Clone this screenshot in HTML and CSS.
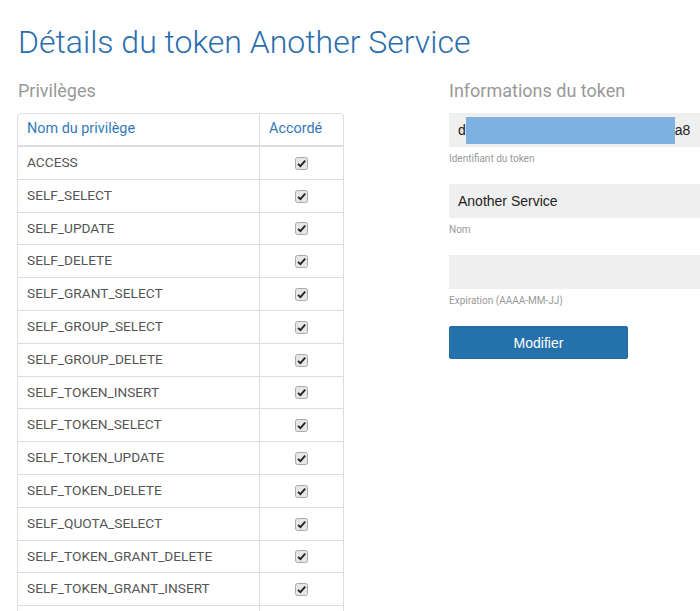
FILE: index.html
```html
<!DOCTYPE html>
<html lang="fr">
<head>
<meta charset="utf-8">
<title>Détails du token</title>
<link rel="stylesheet" href="styles.css">
</head>
<body>
<div class="page">
  <h1 class="title">Détails du token Another Service</h1>
  <div class="cols">
    <section class="left">
      <h2 class="sub">Privilèges</h2>
      <table class="priv">
        <thead>
          <tr><th class="c-name">Nom du privilège</th><th class="c-ok">Accordé</th></tr>
        </thead>
        <tbody>
          <tr><td>ACCESS</td><td class="c-ok"><span class="chk"><svg viewBox="0 0 13 13" width="13" height="13"><rect x="0.5" y="0.5" width="12" height="12" rx="2" fill="#e6e6e6" stroke="#a8a8a8"/><path d="M3 6.8 L5.4 9.2 L10.2 3.6" fill="none" stroke="#222" stroke-width="1.8"/></svg></span></td></tr>
          <tr><td>SELF_SELECT</td><td class="c-ok"><span class="chk"><svg viewBox="0 0 13 13" width="13" height="13"><rect x="0.5" y="0.5" width="12" height="12" rx="2" fill="#e6e6e6" stroke="#a8a8a8"/><path d="M3 6.8 L5.4 9.2 L10.2 3.6" fill="none" stroke="#222" stroke-width="1.8"/></svg></span></td></tr>
          <tr><td>SELF_UPDATE</td><td class="c-ok"><span class="chk"><svg viewBox="0 0 13 13" width="13" height="13"><rect x="0.5" y="0.5" width="12" height="12" rx="2" fill="#e6e6e6" stroke="#a8a8a8"/><path d="M3 6.8 L5.4 9.2 L10.2 3.6" fill="none" stroke="#222" stroke-width="1.8"/></svg></span></td></tr>
          <tr><td>SELF_DELETE</td><td class="c-ok"><span class="chk"><svg viewBox="0 0 13 13" width="13" height="13"><rect x="0.5" y="0.5" width="12" height="12" rx="2" fill="#e6e6e6" stroke="#a8a8a8"/><path d="M3 6.8 L5.4 9.2 L10.2 3.6" fill="none" stroke="#222" stroke-width="1.8"/></svg></span></td></tr>
          <tr><td>SELF_GRANT_SELECT</td><td class="c-ok"><span class="chk"><svg viewBox="0 0 13 13" width="13" height="13"><rect x="0.5" y="0.5" width="12" height="12" rx="2" fill="#e6e6e6" stroke="#a8a8a8"/><path d="M3 6.8 L5.4 9.2 L10.2 3.6" fill="none" stroke="#222" stroke-width="1.8"/></svg></span></td></tr>
          <tr><td>SELF_GROUP_SELECT</td><td class="c-ok"><span class="chk"><svg viewBox="0 0 13 13" width="13" height="13"><rect x="0.5" y="0.5" width="12" height="12" rx="2" fill="#e6e6e6" stroke="#a8a8a8"/><path d="M3 6.8 L5.4 9.2 L10.2 3.6" fill="none" stroke="#222" stroke-width="1.8"/></svg></span></td></tr>
          <tr><td>SELF_GROUP_DELETE</td><td class="c-ok"><span class="chk"><svg viewBox="0 0 13 13" width="13" height="13"><rect x="0.5" y="0.5" width="12" height="12" rx="2" fill="#e6e6e6" stroke="#a8a8a8"/><path d="M3 6.8 L5.4 9.2 L10.2 3.6" fill="none" stroke="#222" stroke-width="1.8"/></svg></span></td></tr>
          <tr><td>SELF_TOKEN_INSERT</td><td class="c-ok"><span class="chk"><svg viewBox="0 0 13 13" width="13" height="13"><rect x="0.5" y="0.5" width="12" height="12" rx="2" fill="#e6e6e6" stroke="#a8a8a8"/><path d="M3 6.8 L5.4 9.2 L10.2 3.6" fill="none" stroke="#222" stroke-width="1.8"/></svg></span></td></tr>
          <tr><td>SELF_TOKEN_SELECT</td><td class="c-ok"><span class="chk"><svg viewBox="0 0 13 13" width="13" height="13"><rect x="0.5" y="0.5" width="12" height="12" rx="2" fill="#e6e6e6" stroke="#a8a8a8"/><path d="M3 6.8 L5.4 9.2 L10.2 3.6" fill="none" stroke="#222" stroke-width="1.8"/></svg></span></td></tr>
          <tr><td>SELF_TOKEN_UPDATE</td><td class="c-ok"><span class="chk"><svg viewBox="0 0 13 13" width="13" height="13"><rect x="0.5" y="0.5" width="12" height="12" rx="2" fill="#e6e6e6" stroke="#a8a8a8"/><path d="M3 6.8 L5.4 9.2 L10.2 3.6" fill="none" stroke="#222" stroke-width="1.8"/></svg></span></td></tr>
          <tr><td>SELF_TOKEN_DELETE</td><td class="c-ok"><span class="chk"><svg viewBox="0 0 13 13" width="13" height="13"><rect x="0.5" y="0.5" width="12" height="12" rx="2" fill="#e6e6e6" stroke="#a8a8a8"/><path d="M3 6.8 L5.4 9.2 L10.2 3.6" fill="none" stroke="#222" stroke-width="1.8"/></svg></span></td></tr>
          <tr><td>SELF_QUOTA_SELECT</td><td class="c-ok"><span class="chk"><svg viewBox="0 0 13 13" width="13" height="13"><rect x="0.5" y="0.5" width="12" height="12" rx="2" fill="#e6e6e6" stroke="#a8a8a8"/><path d="M3 6.8 L5.4 9.2 L10.2 3.6" fill="none" stroke="#222" stroke-width="1.8"/></svg></span></td></tr>
          <tr><td>SELF_TOKEN_GRANT_DELETE</td><td class="c-ok"><span class="chk"><svg viewBox="0 0 13 13" width="13" height="13"><rect x="0.5" y="0.5" width="12" height="12" rx="2" fill="#e6e6e6" stroke="#a8a8a8"/><path d="M3 6.8 L5.4 9.2 L10.2 3.6" fill="none" stroke="#222" stroke-width="1.8"/></svg></span></td></tr>
          <tr><td>SELF_TOKEN_GRANT_INSERT</td><td class="c-ok"><span class="chk"><svg viewBox="0 0 13 13" width="13" height="13"><rect x="0.5" y="0.5" width="12" height="12" rx="2" fill="#e6e6e6" stroke="#a8a8a8"/><path d="M3 6.8 L5.4 9.2 L10.2 3.6" fill="none" stroke="#222" stroke-width="1.8"/></svg></span></td></tr>
          <tr><td>SELF_TOKEN_GRANT_SELECT</td><td class="c-ok"><span class="chk"><svg viewBox="0 0 13 13" width="13" height="13"><rect x="0.5" y="0.5" width="12" height="12" rx="2" fill="#e6e6e6" stroke="#a8a8a8"/><path d="M3 6.8 L5.4 9.2 L10.2 3.6" fill="none" stroke="#222" stroke-width="1.8"/></svg></span></td></tr>
        </tbody>
      </table>
    </section>
    <section class="right">
      <h2 class="sub">Informations du token</h2>
      <div class="field">
        <div class="input">d<span class="redact"></span>a8</div>
        <div class="help">Identifiant du token</div>
      </div>
      <div class="field">
        <div class="input">Another Service</div>
        <div class="help">Nom</div>
      </div>
      <div class="field">
        <div class="input"></div>
        <div class="help">Expiration (AAAA-MM-JJ)</div>
      </div>
      <button class="btn" type="button">Modifier</button>
    </section>
  </div>
</div>
</body>
</html>
```
FILE: styles.css
```css
html, body {
  margin: 0;
  padding: 0;
  height: 611px;
  overflow: hidden;
  background: #fff;
}
body {
  font-family: Roboto, "Liberation Sans", sans-serif;
  color: #555;
}
.page {
  padding: 22px 0 0 18px;
}
.title {
  margin: 0;
  font-family: Roboto, sans-serif;
  font-weight: 300;
  font-size: 32px;
  line-height: 40px;
  color: #2a6ead;
}
.cols {
  display: grid;
  grid-template-columns: 327px 1fr;
  column-gap: 104px;
  margin-top: 17px;
}
.sub {
  margin: 0 0 10px 0;
  font-weight: 400;
  font-size: 18px;
  line-height: 24px;
  color: #999;
}
.priv {
  width: 327px;
  border: 1px solid #ddd;
  border-radius: 4px;
  border-spacing: 0;
  border-collapse: separate;
  font-size: 13.7px;
  color: #555;
  margin-left: -1px;
}
.priv th {
  text-align: left;
  font-weight: 400;
  font-size: 14.4px;
  color: #337ab7;
  padding: 7px 9px 8px 9px;
  line-height: 16px;
  border-bottom: 2px solid #ddd;
}
.priv td {
  padding: 8px 9px;
  line-height: 15.8px;
  border-top: 1px solid #ddd;
}
.priv tbody tr:first-child td {
  border-top: none;
}
.priv th + th, .priv td + td {
  border-left: 1px solid #ddd;
}
.priv .c-name {
  width: 223px;
}
.priv td.c-ok {
  text-align: center;
}
.chk {
  display: inline-block;
  width: 13px;
  height: 13px;
  vertical-align: middle;
  line-height: 0;
}
.chk svg {
  display: block;
}
.right {
  width: 251px;
}
.field {
  margin-bottom: 18px;
}
.field:first-of-type {
  margin-top: 1px;
}
.input {
  height: 34px;
  box-sizing: border-box;
  background: #efefef;
  padding: 0 9px;
  display: flex;
  align-items: center;
  font-family: "Liberation Sans", Arial, sans-serif;
  font-size: 14px;
  color: #222;
  white-space: nowrap;
}
.redact {
  display: inline-block;
  width: 209px;
  height: 27px;
  background: #7fb0e2;
}
.help {
  margin-top: 5px;
  font-size: 10px;
  line-height: 14px;
  color: #999;
}
.btn {
  display: block;
  margin-top: 0;
  width: 179px;
  height: 33px;
  border: 1px solid #1f6ba4;
  border-radius: 2px;
  background: #2471ab;
  color: #fff;
  font-family: "Liberation Sans", Arial, sans-serif;
  font-size: 14px;
  padding: 0;
}
```
